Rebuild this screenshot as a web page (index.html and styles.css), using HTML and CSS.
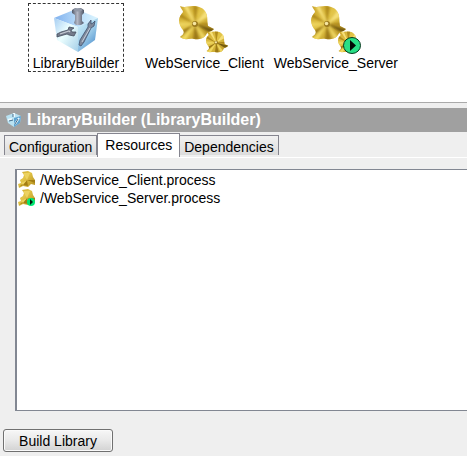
FILE: index.html
```html
<!DOCTYPE html>
<html lang="en">
<head>
<meta charset="utf-8">
<title>LibraryBuilder</title>
<link rel="stylesheet" href="styles.css">
</head>
<body>
<svg class="defs" aria-hidden="true">
  <defs>
    <linearGradient id="gold" x1="0" y1="0" x2="1" y2="1"><stop offset="0" stop-color="#c9a32b"/><stop offset=".4" stop-color="#e3c548"/><stop offset="1" stop-color="#b18b1b"/></linearGradient>
    <linearGradient id="cubeTop" x1="0" y1="0" x2="1" y2="0"><stop offset="0" stop-color="#7fb0ee"/><stop offset=".5" stop-color="#b5d9f8"/><stop offset="1" stop-color="#dcf5ff"/></linearGradient>
    <linearGradient id="cubeLeft" x1="0" y1="0" x2="1" y2="1"><stop offset="0" stop-color="#a6cdf2"/><stop offset=".45" stop-color="#edffff"/><stop offset="1" stop-color="#a5cfe8"/></linearGradient>
    <linearGradient id="cubeRight" x1="0" y1="0" x2=".7" y2="1"><stop offset="0" stop-color="#d3f3fc"/><stop offset=".5" stop-color="#a5d2ec"/><stop offset="1" stop-color="#4a8ccb"/></linearGradient>
    <linearGradient id="steel" x1="0" y1="0" x2="1" y2="0"><stop offset="0" stop-color="#535b6b"/><stop offset=".45" stop-color="#b4b8c6"/><stop offset="1" stop-color="#505868"/></linearGradient>
    <filter id="soft" x="-10%" y="-10%" width="120%" height="120%"><feGaussianBlur stdDeviation="1"/></filter>
    <clipPath id="blades"><path d="M1 0C6 2 9 0 14 0c6 0 11 2 13 7 2 4 1 9 2 13l6 3c-3 3-6 2-8 6-3 4-7 5-12 4-5-1-9 2-14-2 3-2 5-4 3-7-2-2-4-6-4-10 0-3 2-5 4-8C4 4 2 3 1 0Z"/></clipPath>
    <symbol id="gear" viewBox="0 0 36 34">
      <g clip-path="url(#blades)">
        <path d="M0 0h36v34H0Z" fill="url(#gold)"/>
        <g filter="url(#soft)">
          <path d="M16 18 4 0h5ZM16 18 30 0l6 7Z" fill="#f5df78"/>
          <path d="M16 18 14 0h5ZM16 18 0 6v5Z" fill="#b18c1d"/>
          <path d="m16 18 20-2v5Z" fill="#ad871a"/>
          <path d="m16 18 20 5v7Z" fill="#765b0c"/>
          <path d="m16 18 14 16h-7ZM16 18 0 16v5Z" fill="#ecd35e"/>
          <path d="m16 18 4 16h-6ZM16 18 0 26v6Z" fill="#9c7915"/>
          <path d="m16 18-9 16H1Z" fill="#f1d961"/>
        </g>
      </g>
      <circle cx="16" cy="18" r="3" fill="#9c7b20"/><circle cx="15.500" cy="17.500" r="1.800" fill="#f5e5a1"/>
    </symbol>
    <symbol id="cube" viewBox="0 0 46 46">
      <path d="M1 11 23 2l22 9-20 9Z" fill="url(#cubeTop)"/>
      <path d="m1 11 24 9v25L4 33Z" fill="url(#cubeLeft)"/>
      <path d="m25 20 20-9-3 22-17 12Z" fill="url(#cubeRight)"/>
      <path d="m19 3 3-2h6l3 2v3l-2 2v6l2 2-3 2h-5l-2-2 1-3V8l-3-2Z" fill="url(#steel)"/>
      <ellipse cx="25" cy="3" rx="4" ry="1.500" fill="#9299a8"/>
      <path d="m4 27 4-2 7-2 1-3 5 1-3 2 1 2h4l-2 4-5-1-2-1-7 2-3 1Z" fill="#747b8b" stroke="#454e5e" stroke-width=".8"/>
      <path d="m7 27 9-3 1 1" fill="none" stroke="#c5cad3" stroke-width="1.300"/>
      <path d="m26 38 2 1 3-4 7-14 3-2 1-5-2 2-2 1v-4l-3 4v3l-8 13Z" fill="#7f899b" stroke="#3f506f" stroke-width=".8"/>
      <path d="m29 35 8-14" stroke="#c4cfdd"/>
    </symbol>
    <symbol id="process" viewBox="0 0 50 50">
      <use href="#gear" x="0" y="1" width="36" height="34"/>
      <use href="#gear" x="27" y="26" width="23" height="22"/>
    </symbol>
    <symbol id="play" viewBox="0 0 18 17">
      <ellipse cx="9" cy="8.500" rx="8.500" ry="8" fill="#28df85" stroke="#06391e"/>
      <path d="m7 3 6 5.500L7 14Z" fill="#020804"/>
    </symbol>
    <symbol id="smallgear" viewBox="0 0 18 18">
      <path d="m4 1 6-1 4 2 1 4 2 3v5l-4-1-3 3-5-1-4 2-1-4 3-1-1-3 3-2 1-3Z" fill="url(#gold)"/>
      <path d="m1 16 8-7 1 6-5-1ZM9 9l8 0v3Z" fill="#a37e14"/>
      <path d="m5 2 4 7 3-7ZM3 12l6-3-4 5Z" fill="#ecd260"/>
    </symbol>
  </defs>
</svg>
<main class="app">
  <section class="canvas" aria-label="Resources overview">
    <a class="node selected" href="#library"><svg class="picture cube"><use href="#cube"/></svg><span>LibraryBuilder</span></a>
    <a class="node" href="#client"><svg class="picture process"><use href="#process"/></svg><span>WebService_Client</span></a>
    <a class="node" href="#server"><svg class="picture process"><use href="#process"/><use href="#play" x="32" y="32" width="18" height="17"/></svg><span>WebService_Server</span></a>
  </section>
  <section class="details">
    <h1 class="title"><svg class="titleicon" viewBox="0 0 16 16" aria-hidden="true"><path d="m0 4 8-3 7 3-1 7-6 4-6-4Z" fill="#b9e2f2"/><path d="m8 6 7-2-1 7-6 4Z" fill="#5ea3d0"/><path d="m2 8 4-1m3 5 4-6M8 1v4" stroke="#edfaff" stroke-width="2"/><path d="m3 9 4-1m2 4 3-5M7 2v3" stroke="#456d8b"/></svg>LibraryBuilder (LibraryBuilder)</h1>
    <div class="tabs" role="tablist">
      <button class="tab" role="tab" aria-selected="false">Configuration</button>
      <button class="tab active" role="tab" aria-selected="true">Resources</button>
      <button class="tab" role="tab" aria-selected="false">Dependencies</button>
    </div>
    <div class="panel" role="tabpanel">
      <ul class="list">
        <li><svg class="itemicon" aria-hidden="true"><use href="#smallgear"/></svg>/WebService_Client.process</li>
        <li><svg class="itemicon" aria-hidden="true"><use href="#smallgear"/><circle cx="13" cy="13" r="4" fill="#00e874"/><path d="m12 10 3 3-3 3Z" fill="#02170b"/></svg>/WebService_Server.process</li>
      </ul>
    </div>
    <button class="build">Build Library</button>
  </section>
</main>
</body>
</html>
```
FILE: styles.css
```css
* { box-sizing: border-box; }
body { margin: 0; background: white; color: black; font: 14px/16px "Liberation Sans", Arial, sans-serif; }
button { font: inherit; color: inherit; }
.defs { position: absolute; width: 0; height: 0; }
.app { min-height: 100vh; display: flex; flex-direction: column; margin-right: 2px; }
.canvas { display: flex; gap: 8px; height: 102px; padding: 3px 0 0 28px; }
.node { display: flex; flex-direction: column; align-items: center; justify-content: flex-end; height: 69px; min-width: 96px; color: black; text-decoration: none; border: 1px solid transparent; }
.node.selected { border: 1px dashed #333; margin-right: 12px; }
.picture { display: block; flex: none; }
.cube { width: 46px; height: 46px; margin-bottom: 2px; }
.process { width: 50px; height: 50px; }
.details { flex: 1; display: flex; flex-direction: column; background: #efefef; border-top: 1px solid #aaa; padding-top: 5px; }
.title { display: flex; align-items: center; gap: 5px; margin: 0; height: 24px; padding-left: 6px; background: #a0a0a0; color: white; font-size: 16px; line-height: 24px; }
.titleicon { width: 16px; height: 16px; }
.tabs { display: flex; align-items: flex-start; height: 25px; padding: 1px 0 0 4px; }
.tab { height: 20px; margin-top: 2px; padding: 2px 4px 0; border: 1px solid #85858f; border-width: 1px 1px 0 0; line-height: 16px; background: linear-gradient(#f1f1f1, #dcdcdc); }
.tab:first-child { border-left-width: 1px; }
.tab.active { height: 24px; margin-top: 0; padding: 0 7px 2px; border-left-width: 1px; background: white; }
.panel { flex: 1; display: flex; border-top: 1px solid white; padding: 11px 0 18px 15px; }
.list { flex: 1; margin: 0; padding: 1px; list-style: none; background: white; border: 1px solid #828792; border-left-width: 2px; border-right: 0; }
.list li { display: flex; align-items: center; gap: 4px; height: 18px; }
.itemicon { width: 18px; height: 18px; }
.build { align-self: flex-start; width: 110px; height: 23px; margin: 0 0 4px 3px; padding: 0; border: 1px solid #707070; border-radius: 3px; background: linear-gradient(#f7f7f7, #e9e9e9 48%, #d2d2d2); box-shadow: inset 0 0 0 1px #fafafa; }
```
